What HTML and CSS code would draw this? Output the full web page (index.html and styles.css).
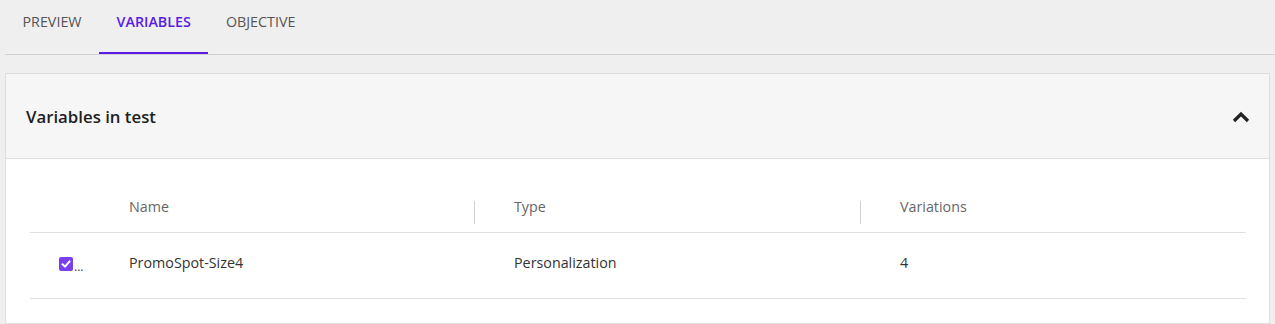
FILE: index.html
```html
<!DOCTYPE html>
<html lang="en">
<head>
<meta charset="utf-8">
<title>Variables</title>
<link rel="stylesheet" href="styles.css">
</head>
<body>
<nav class="tabs">
  <a class="tab">PREVIEW</a>
  <a class="tab active">VARIABLES</a>
  <a class="tab">OBJECTIVE</a>
</nav>
<section class="card">
  <header class="card-head">
    <h2 class="card-title">Variables in test</h2>
    <svg class="chevron" width="18" height="12" viewBox="0 0 18 12"><polyline points="2,10 9,3 16,10" fill="none" stroke="#222" stroke-width="3.2" stroke-linecap="butt" stroke-linejoin="miter"/></svg>
  </header>
  <div class="card-body">
    <div class="table">
      <div class="row head">
        <div class="cell sel"></div>
        <div class="cell">Name</div>
        <div class="cell div">Type</div>
        <div class="cell div">Variations</div>
      </div>
      <div class="row">
        <div class="cell sel"><span class="check"><svg width="14" height="14" viewBox="0 0 14 14"><polyline points="3.5,7.2 6,9.6 10.6,4.4" fill="none" stroke="#fff" stroke-width="2" stroke-linecap="round" stroke-linejoin="round"/></svg></span><span class="more">...</span></div>
        <div class="cell">PromoSpot-Size4</div>
        <div class="cell">Personalization</div>
        <div class="cell">4</div>
      </div>
    </div>
  </div>
</section>
</body>
</html>
```

FILE: styles.css
```css
* { box-sizing: border-box; }
html, body { margin: 0; padding: 0; }
body {
  background: #efefef;
  font-family: "Open Sans", "Noto Sans", sans-serif;
  color: #222;
  height: 324px;
  overflow: hidden;
}
.tabs {
  display: flex;
  margin-left: 5px;
  height: 55px;
  border-bottom: 1px solid #d3d3d3;
}
.tab {
  display: block;
  padding: 12px 17.5px 0;
  font-size: 14.3px;
  font-weight: 400;
  color: #555;
  border-bottom: 2px solid transparent;
  line-height: 20px;
}
.tab.active {
  color: #5b1be6;
  font-weight: 600;
  border-bottom-color: #5b1be6;
}
.card {
  margin: 18px 5px 0 5px;
  background: #fff;
  border: 1px solid #dedede;
  height: 251px;
}
.card-head {
  display: flex;
  align-items: center;
  justify-content: space-between;
  height: 85px;
  padding: 0 19px 0 20px;
  background: #f6f6f6;
  border-bottom: 1px solid #e0e0e0;
}
.card-title {
  margin: 0;
  font-size: 16.8px;
  font-weight: 600;
  color: #1e1e1e;
}
.chevron { display: block; margin-top: 2px; }
.card-body {
  padding: 25px 23px 0 24px;
}
.table { display: flex; flex-direction: column; }
.row {
  display: grid;
  grid-template-columns: 59px 385px 386px 1fr;
  border-bottom: 1px solid #e0e0e0;
  height: 66px;
  align-items: center;
  font-size: 14.3px;
  color: #333;
}
.row.head {
  height: 49px;
  color: #666;
}
.cell {
  padding-left: 40px;
  position: relative;
  white-space: nowrap;
  padding-bottom: 6px;
}
.row.head .cell { padding-bottom: 3px; }
.cell.sel { padding-left: 29px; display: flex; align-items: flex-end; padding-bottom: 3px; }
.cell.div::before {
  content: "";
  position: absolute;
  left: 0;
  top: 4px;
  height: 23px;
  border-left: 1px solid #d0d0d0;
}
.check {
  display: block;
  width: 14px;
  height: 14px;
  border-radius: 2px;
  background: #7a3ff0;
}
.check svg { display: block; }
.more {
  font-size: 12px;
  line-height: 9px;
  margin-left: 1px;
  color: #333;
}
```
